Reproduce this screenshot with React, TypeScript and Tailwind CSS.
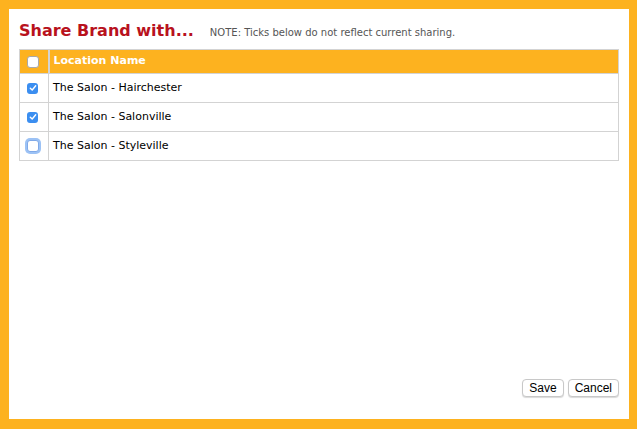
const rows = [
  { name: "The Salon - Hairchester", checked: true },
  { name: "The Salon - Salonville", checked: true },
  { name: "The Salon - Styleville", checked: false, focus: true },
];

function Box({ checked, focus }: { checked?: boolean; focus?: boolean }) {
  if (checked) {
    return (
      <span className="flex h-[11px] w-[11px] items-center justify-center rounded-[3px] bg-[#3b8ef0]">
        <svg width="8" height="8" viewBox="0 0 8 8">
          <path d="M1.3 4.2 L3.2 6 L6.7 1.8" fill="none" stroke="white" strokeWidth="1.4" strokeLinecap="round" strokeLinejoin="round" />
        </svg>
      </span>
    );
  }
  return (
    <span
      className={
        focus
          ? "block h-[12px] w-[12px] rounded-[3px] border border-[#7fa9e8] bg-white shadow-[0_0_0_2px_#9cc2f5]"
          : "block h-[12px] w-[12px] rounded-[3px] border border-[#a9a9a9] bg-white"
      }
    />
  );
}

export default function App() {
  return (
    <div className="h-[429px] w-[637px] bg-[#fdb21f] pl-[9px] pr-[8px] pt-[9px] pb-[10px] font-['DejaVu_Sans',Verdana,sans-serif]">
      <div className="flex h-full flex-col bg-white px-[10px]">
        <div className="flex items-baseline pt-[11px] pb-[7px]">
          <h1 className="text-[16px] font-bold leading-[22px] text-[#b8121d]">Share Brand with...</h1>
          <span className="ml-[16px] text-[10px] text-[#555]">NOTE: Ticks below do not reflect current sharing.</span>
        </div>
        <table className="w-full border-collapse border border-[#d3d3d3] text-[11px]">
          <thead>
            <tr className="h-[24px] bg-[#fdb21f]">
              <th className="w-[29px] border-r-2 border-[#d3d3d3] pl-[7px]">
                <Box />
              </th>
              <th className="pl-[4px] text-left font-bold text-white">Location Name</th>
            </tr>
          </thead>
          <tbody>
            {rows.map((r) => (
              <tr key={r.name} className="h-[29px] border-t border-[#d3d3d3]">
                <td className="border-r border-[#d3d3d3] pl-[7px]">
                  <Box checked={r.checked} focus={r.focus} />
                </td>
                <td className="pl-[4px] text-black">{r.name}</td>
              </tr>
            ))}
          </tbody>
        </table>
        <div className="flex-1" />
        <div className="flex justify-end gap-[4px] pb-[22px] font-['Liberation_Sans',Arial,sans-serif]">
          <button className="h-[18px] rounded-[4px] border border-[#c8c8c8] bg-white px-[6px] text-[12px] leading-none text-black shadow-[0_1px_1px_rgba(0,0,0,0.15)]">
            Save
          </button>
          <button className="h-[18px] rounded-[4px] border border-[#c8c8c8] bg-white px-[6px] text-[12px] leading-none text-black shadow-[0_1px_1px_rgba(0,0,0,0.15)]">
            Cancel
          </button>
        </div>
      </div>
    </div>
  );
}
